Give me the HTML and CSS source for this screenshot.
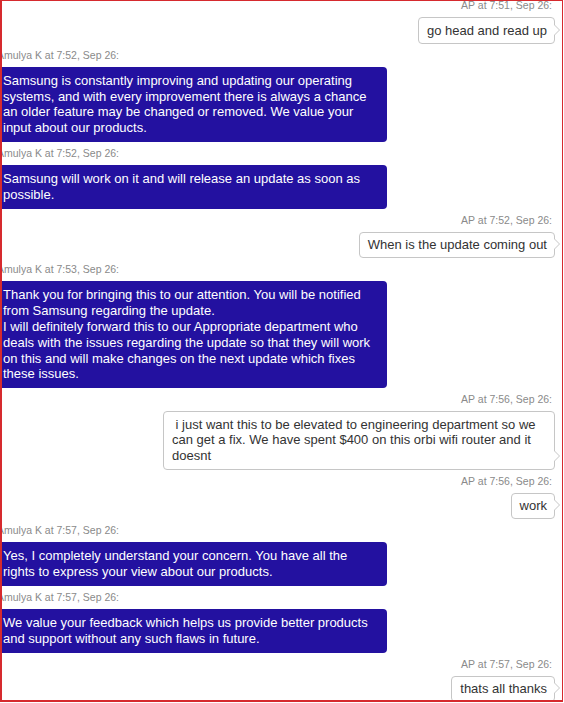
FILE: index.html
```html
<!DOCTYPE html>
<html lang="en">
<head>
    <meta charset="UTF-8">
    <title>Chat transcript</title>
    <link rel="stylesheet" href="styles.css">
</head>
<body>
    <div class="frame">
        <div class="chat">
            <div class="msg msg-user">
                <div class="meta">AP at 7:51, Sep 26:</div>
                <div class="bubble">go head and read up</div>
            </div>

            <div class="msg msg-agent">
                <div class="meta">Amulya K at 7:52, Sep 26:</div>
                <div class="bubble">Samsung is constantly improving and updating our operating systems, and with every improvement there is always a chance an older feature may be changed or removed. We value your input about our products.</div>
            </div>

            <div class="msg msg-agent">
                <div class="meta">Amulya K at 7:52, Sep 26:</div>
                <div class="bubble">Samsung will work on it and will release an update as soon as possible.</div>
            </div>

            <div class="msg msg-user">
                <div class="meta">AP at 7:52, Sep 26:</div>
                <div class="bubble">When is the update coming out</div>
            </div>

            <div class="msg msg-agent">
                <div class="meta">Amulya K at 7:53, Sep 26:</div>
                <div class="bubble">Thank you for bringing this to our attention. You will be notified from Samsung regarding the update.<br>I will definitely forward this to our Appropriate department who deals with the issues regarding the update so that they will work on this and will make changes on the next update which fixes these issues.</div>
            </div>

            <div class="msg msg-user">
                <div class="meta">AP at 7:56, Sep 26:</div>
                <div class="bubble">&nbsp;i just want this to be elevated to engineering department so we can get a fix. We have spent $400 on this orbi wifi router and it doesnt</div>
            </div>

            <div class="msg msg-user">
                <div class="meta">AP at 7:56, Sep 26:</div>
                <div class="bubble">work</div>
            </div>

            <div class="msg msg-agent">
                <div class="meta">Amulya K at 7:57, Sep 26:</div>
                <div class="bubble">Yes, I completely understand your concern. You have all the rights to express your view about our products.</div>
            </div>

            <div class="msg msg-agent">
                <div class="meta">Amulya K at 7:57, Sep 26:</div>
                <div class="bubble">We value your feedback which helps us provide better products and support without any such flaws in future.</div>
            </div>

            <div class="msg msg-user">
                <div class="meta">AP at 7:57, Sep 26:</div>
                <div class="bubble">thats all thanks</div>
            </div>
        </div>
    </div>
</body>
</html>
```

FILE: styles.css
```css
body {
    margin: 0;
    background: #fff;
    font-family: 'Liberation Sans', Arial, sans-serif;
}

.frame {
    box-sizing: border-box;
    width: 563px;
    height: 702px;
    border: 1px solid #d62a2e;
    border-left-width: 2px;
    border-bottom-width: 2px;
    overflow: hidden;
}

.chat {
    display: flex;
    flex-direction: column;
    gap: 5px;
    margin: -2px 7px 0 -5px;
}

.msg {
    display: flex;
    flex-direction: column;
}

.meta {
    font-size: 10.5px;
    line-height: 13px;
    color: #8a8a8a;
    margin-bottom: 5px;
}

.bubble {
    font-size: 13px;
    line-height: 15.8px;
    border-radius: 4px;
}

/* agent side */
.msg-agent {
    align-items: flex-start;
}

.msg-agent .bubble {
    box-sizing: border-box;
    width: 390px;
    padding: 6px 6px;
    background: #2311a0;
    color: #fff;
}

/* customer side */
.msg-user {
    align-items: flex-end;
}

.msg-user .meta {
    padding-right: 3px;
}

.msg-user .bubble {
    position: relative;
    max-width: 392px;
    box-sizing: border-box;
    padding: 4.5px 7px 4.5px 8px;
    border: 1px solid #c6c6c6;
    background: #fff;
    color: #333;
}

.msg-user .bubble::before,
.msg-user .bubble::after {
    content: '';
    position: absolute;
    width: 0;
    height: 0;
    border-style: solid;
    border-color: transparent;
}

.msg-user .bubble::before {
    right: -6px;
    bottom: 7px;
    border-width: 6px 0 6px 6px;
    border-left-color: #c6c6c6;
}

.msg-user .bubble::after {
    right: -5px;
    bottom: 8px;
    border-width: 5px 0 5px 5px;
    border-left-color: #fff;
}
```
